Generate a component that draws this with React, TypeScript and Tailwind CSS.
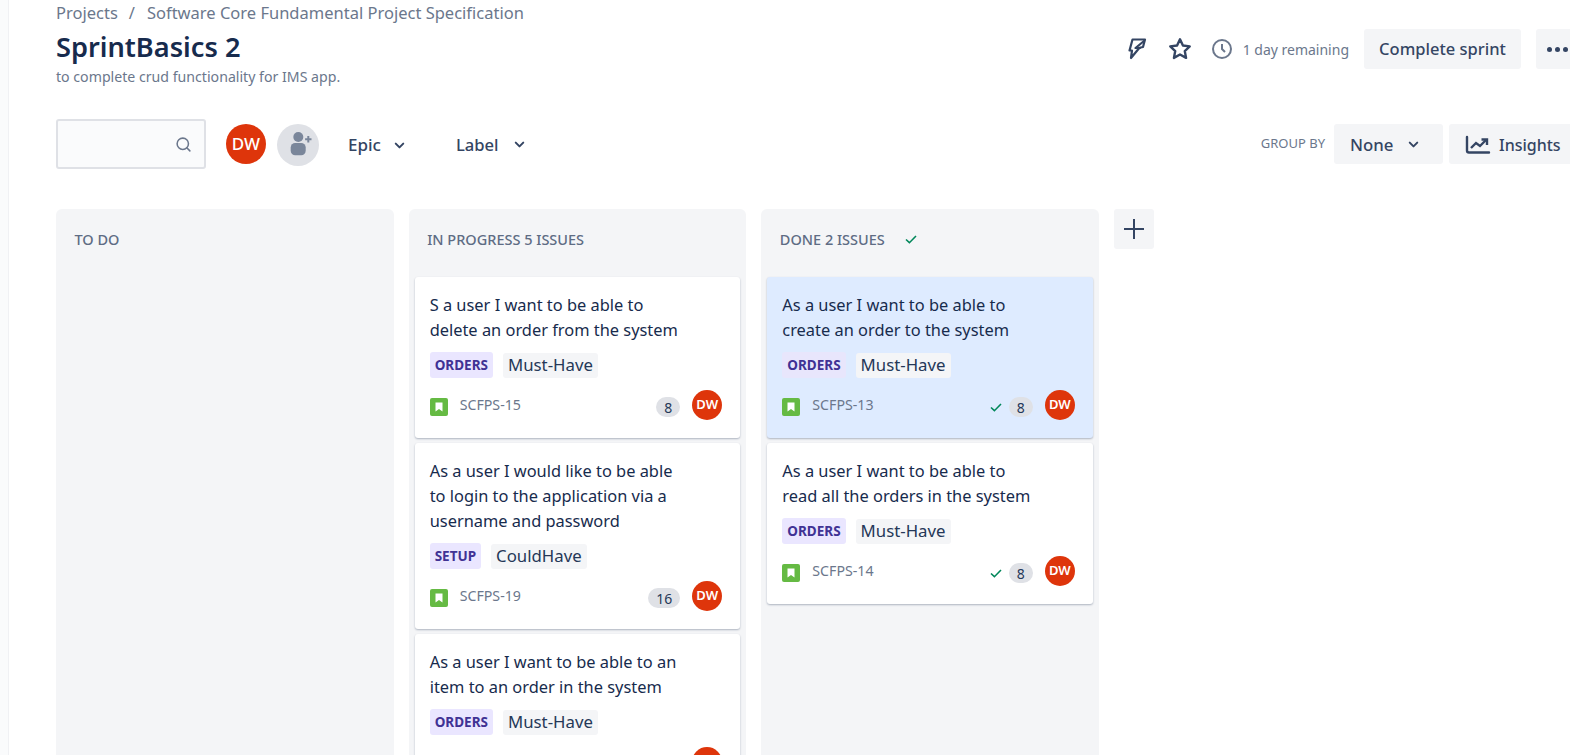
import { ChevronDown, Search } from "lucide-react";

const font = { fontFamily: '"Noto Sans", "Open Sans", sans-serif' };

function Check() {
  return (
    <svg width="16" height="16" viewBox="0 0 16 16" fill="none" stroke="#00875a" strokeWidth="1.6">
      <path d="M3 8.5l3.4 3.2L13 5" />
    </svg>
  );
}

function Avatar({ small }: { small?: boolean }) {
  return small ? (
    <div className="w-[30px] h-[30px] rounded-full bg-[#de350b] text-white text-[13px] font-semibold flex items-center justify-center">
      DW
    </div>
  ) : (
    <div className="w-[40px] h-[40px] rounded-full bg-[#de350b] text-white text-[17px] font-medium flex items-center justify-center">
      DW
    </div>
  );
}

function StoryIcon() {
  return (
    <svg className="mt-[3px]" width="18" height="18" viewBox="0 0 18 18">
      <rect width="18" height="18" rx="2" fill="#65ba43" />
      <path d="M5.5 4.5h7v9L9 11l-3.5 2.5z" fill="#fff" />
    </svg>
  );
}

type CardProps = {
  lines: string[];
  epic: string;
  label: string;
  id?: string;
  points?: string;
  done?: boolean;
  selected?: boolean;
};

function Card({ lines, epic, label, id, points, done, selected }: CardProps) {
  return (
    <div
      className={`mx-[6px] mb-[5px] rounded-[3px] px-[15px] pt-[15px] pb-[18px] shadow-[0_1px_2px_rgba(9,30,66,0.3)] ${
        selected ? "bg-[#deebff]" : "bg-white"
      }`}
    >
      <div className="text-[16.4px] leading-[25px] text-[#172b4d]">
        {lines.map((l) => (
          <div key={l}>{l}</div>
        ))}
      </div>
      <div className="flex items-center gap-[10px] mt-[10px] h-[26px]">
        <span
          className={`h-[26px] px-[5px] rounded-[3px] text-[#403294] text-[13.5px] font-bold flex items-center ${
            selected ? "bg-[#e8e6fc]" : "bg-[#eae6ff]"
          }`}
        >
          {epic}
        </span>
        <span className="h-[25px] px-[5px] rounded-[3px] bg-[#f4f5f7] text-[#253858] text-[16.8px] flex items-center">
          {label}
        </span>
      </div>
      <div className="flex items-center mt-[12px] h-[30px]">
        {id && (
          <>
            <StoryIcon />
            <span className="ml-[12px] text-[14.2px] text-[#6b778c]">{id}</span>
          </>
        )}
        <div className="ml-auto flex items-center">
          {done && (
            <span className="mr-[5px] mt-[3px]">
              <Check />
            </span>
          )}
          {points && (
            <span className="mt-[4px] h-[20px] px-[8px] rounded-full bg-[#dfe1e6] text-[#253858] text-[14px] flex items-center">
              {points}
            </span>
          )}
          <span className="ml-[12px] mr-[3px]">
            <Avatar small />
          </span>
        </div>
      </div>
    </div>
  );
}

function Column({ title, check, children }: { title: string; check?: boolean; children?: React.ReactNode }) {
  return (
    <div className="w-[337.5px] h-[600px] bg-[#f4f5f7] rounded-t-[6px] shrink-0">
      <div className="h-[68px] pl-[18.5px] pt-[20px] flex items-start gap-[18px]">
        <span className="text-[14.5px] leading-[20px] font-medium text-[#5e6c84]">{title}</span>
        {check && (
          <span className="mt-[2px]">
            <Check />
          </span>
        )}
      </div>
      {children}
    </div>
  );
}

export default function App() {
  return (
    <div className="h-screen w-screen overflow-hidden bg-white flex" style={font}>
      <div className="w-[9px] shrink-0 bg-[#fafbfc] border-r border-[#f0f1f4]" />
      <main className="w-[1567px] shrink-0 pl-[47px]">
        <div className="flex justify-between items-start">
          <div>
            <div className="flex items-center gap-[11px] text-[16.5px] leading-[26px] text-[#6b778c]">
              <span>Projects</span>
              <span>/</span>
              <span className="ml-[1px]">Software Core Fundamental Project Specification</span>
            </div>
            <h1 className="mt-[4px] text-[27.2px] leading-[34px] font-semibold text-[#172b4d]">SprintBasics 2</h1>
            <p className="mt-[3px] text-[14.15px] leading-[20px] text-[#6b778c]">to complete crud functionality for IMS app.</p>
          </div>
          <div className="flex items-center mt-[29px]">
            <svg width="24" height="24" viewBox="0 0 24 24" fill="none" stroke="#344563" strokeWidth="2.2" strokeLinejoin="round" strokeLinecap="round">
              <path d="M7.5 2.5H20L18 10l-3.5.8L6 21l1-7.5H4.5z" />
              <path d="M19 4l-8.5 7h4.5" />
            </svg>
            <svg className="ml-[18px]" width="26" height="26" viewBox="0 0 24 24" fill="none" stroke="#344563" strokeWidth="2.2" strokeLinejoin="round">
              <path d="M12 3l2.7 5.8 6.3.8-4.6 4.3 1.2 6.3L12 17.1l-5.6 3.1 1.2-6.3L3 9.6l6.3-.8z" />
            </svg>
            <svg className="ml-[17px]" width="24" height="24" viewBox="0 0 24 24" fill="none" stroke="#6b778c" strokeWidth="2">
              <circle cx="12" cy="12" r="9" />
              <path d="M12 7v5l3 3" />
            </svg>
            <span className="ml-[9px] text-[14px] text-[#6b778c]">1 day remaining</span>
            <button className="ml-[15px] w-[157px] h-[40px] rounded-[3px] bg-[#f4f5f7] text-[16.5px] font-medium text-[#344563]">
              Complete sprint
            </button>
            <button className="ml-[15px] w-[40px] h-[40px] rounded-l-[3px] bg-[#f4f5f7] flex items-center justify-center gap-[3px] pl-[2px]">
              <span className="w-[5px] h-[5px] rounded-full bg-[#344563]" />
              <span className="w-[5px] h-[5px] rounded-full bg-[#344563]" />
              <span className="w-[5px] h-[5px] rounded-full bg-[#344563]" />
            </button>
          </div>
        </div>

        <div className="flex justify-between items-center mt-[33px] h-[48px]">
          <div className="flex items-center">
            <div className="w-[150px] h-[50px] rounded-[3px] border-2 border-[#dfe1e6] bg-[#fafbfc] flex items-center justify-end pr-[12px]">
              <Search size={17} color="#6b778c" strokeWidth={2.2} />
            </div>
            <div className="ml-[20px]">
              <Avatar />
            </div>
            <div className="ml-[11px] mt-[1px] w-[42px] h-[42px] rounded-full bg-[#dfe1e6] flex items-center justify-center">
              <svg width="30" height="30" viewBox="0 0 30 30" fill="#7a869a">
                <circle cx="15.3" cy="7" r="5" />
                <rect x="7.7" y="13" width="15" height="12.3" rx="4.5" />
                <path d="M24.3 6h2v2.2h2.2v2h-2.2v2.2h-2v-2.2h-2.2v-2h2.2z" />
              </svg>
            </div>
            <div className="ml-[29px] pt-[2px] flex items-center text-[17px] font-medium text-[#344563]">
              Epic
              <ChevronDown className="ml-[11px]" size={15} strokeWidth={3.2} />
            </div>
            <div className="ml-[49px] pt-[2px] flex items-center text-[16.6px] font-medium text-[#344563]">
              Label
              <ChevronDown className="ml-[13px]" size={15} strokeWidth={3.2} />
            </div>
          </div>
          <div className="flex items-center">
            <span className="text-[13px] text-[#6b778c]">GROUP BY</span>
            <button className="ml-[9px] w-[109px] h-[40px] rounded-[3px] bg-[#f4f5f7] flex items-center pl-[16px] pt-[1px] text-[16.8px] font-medium text-[#344563]">
              None
              <ChevronDown className="ml-[13px]" size={15} strokeWidth={3.2} />
            </button>
            <button className="ml-[6px] w-[127px] h-[40px] rounded-l-[3px] bg-[#f4f5f7] flex items-center pl-[16px] pt-[1px] text-[16px] font-medium text-[#344563]">
              <svg width="26" height="20" viewBox="0 0 26 20" fill="none" stroke="#344563" strokeWidth="2.4">
                <path d="M2 2v13.5q0 2 2 2h20" strokeLinecap="round" />
                <path d="M6 13l5-5 4 3 6-6" />
                <path d="M16.5 4.5H22V10" />
              </svg>
              <span className="ml-[8px]">Insights</span>
            </button>
          </div>
        </div>

        <div className="flex mt-[41px] gap-[15.17px]">
          <Column title="TO DO" />
          <Column title="IN PROGRESS 5 ISSUES">
            <Card
              lines={["S a user I want to be able to", "delete an order from the system"]}
              epic="ORDERS"
              label="Must-Have"
              id="SCFPS-15"
              points="8"
            />
            <Card
              lines={["As a user I would like to be able", "to login to the application via a", "username and password"]}
              epic="SETUP"
              label="CouldHave"
              id="SCFPS-19"
              points="16"
            />
            <Card
              lines={["As a user I want to be able to an", "item to an order in the system"]}
              epic="ORDERS"
              label="Must-Have"
            />
          </Column>
          <Column title="DONE 2 ISSUES" check>
            <Card
              lines={["As a user I want to be able to", "create an order to the system"]}
              epic="ORDERS"
              label="Must-Have"
              id="SCFPS-13"
              points="8"
              done
              selected
            />
            <Card
              lines={["As a user I want to be able to", "read all the orders in the system"]}
              epic="ORDERS"
              label="Must-Have"
              id="SCFPS-14"
              points="8"
              done
            />
          </Column>
          <button className="w-[40px] h-[40px] rounded-[3px] bg-[#f4f5f7] flex items-center justify-center shrink-0">
            <svg width="24" height="24" viewBox="0 0 24 24" stroke="#344563" strokeWidth="2">
              <path d="M12 2v20M2 12h20" />
            </svg>
          </button>
        </div>
      </main>
    </div>
  );
}
